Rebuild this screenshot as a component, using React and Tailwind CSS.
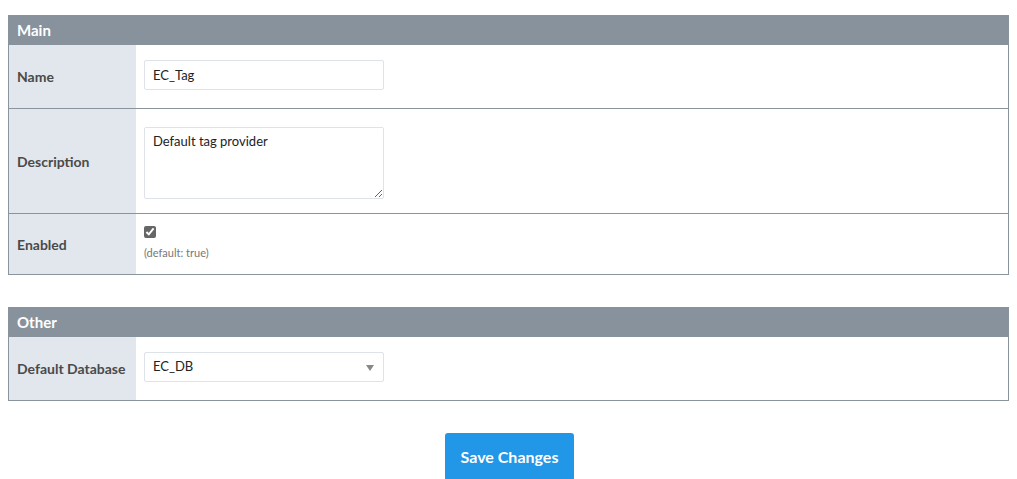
import { useState } from "react";

function Row({ label, children, height, last }) {
  return (
    <div
      className={`flex ${last ? "" : "border-b border-[#8a949e]"}`}
      style={{ height }}
    >
      <div className="w-[127px] shrink-0 bg-[#e1e7ed] flex items-center pl-[8px] text-[14px] font-bold text-[#4a4a4a]">
        {label}
      </div>
      <div className="flex-1 flex flex-col justify-center pl-[8px]">{children}</div>
    </div>
  );
}

function Section({ title, children }) {
  return (
    <div className="border border-[#8a949e] border-t-0 mx-[8px]">
      <div className="h-[30px] bg-[#87929c] flex items-center pl-[8px] text-[15px] font-bold text-white">
        {title}
      </div>
      {children}
    </div>
  );
}

export default function App() {
  const [name, setName] = useState("EC_Tag");
  const [desc, setDesc] = useState("Default tag provider");
  const [enabled, setEnabled] = useState(true);

  return (
    <div
      className="min-h-screen bg-white pt-[15px] text-[#333]"
      style={{ fontFamily: "Lato, 'Open Sans', sans-serif" }}
    >
      <Section title="Main">
        <Row label="Name" height={64}>
          <input
            value={name}
            onChange={(e) => setName(e.target.value)}
            className="w-[240px] h-[30px] border border-[#dde3e8] rounded-[2px] px-[8px] text-[13px] text-[#222] outline-none -mt-[4px]"
          />
        </Row>
        <Row label="Description" height={105}>
          <textarea
            value={desc}
            onChange={(e) => setDesc(e.target.value)}
            className="w-[240px] h-[72px] border border-[#dde3e8] rounded-[2px] px-[8px] py-[4px] text-[13px] text-[#222] outline-none mt-[4px]"
          />
        </Row>
        <Row label="Enabled" height={60} last>
          <div className="flex flex-col items-start gap-[7px]">
            <input
              type="checkbox"
              checked={enabled}
              onChange={(e) => setEnabled(e.target.checked)}
              className="w-[12px] h-[12px] m-0 accent-[#666]"
            />
            <span className="text-[11px] text-[#777]">(default: true)</span>
          </div>
        </Row>
      </Section>

      <div className="h-[32px]" />

      <Section title="Other">
        <Row label="Default Database" height={63} last>
          <div className="relative w-[240px] h-[30px] -mt-[3px] border border-[#dde3e8] rounded-[2px] flex items-center px-[8px] text-[13px] text-[#222]">
            EC_DB
            <svg
              className="absolute right-[9px] top-[12px]"
              width="8"
              height="6"
              viewBox="0 0 8 6"
            >
              <path d="M0 0 L8 0 L4 6 Z" fill="#888" />
            </svg>
          </div>
        </Row>
      </Section>

      <div className="flex justify-center mt-[32px]">
        <button className="w-[129px] h-[48px] ml-[2px] bg-[#2296e7] text-white text-[16px] font-bold rounded-[3px]">
          Save Changes
        </button>
      </div>
    </div>
  );
}
